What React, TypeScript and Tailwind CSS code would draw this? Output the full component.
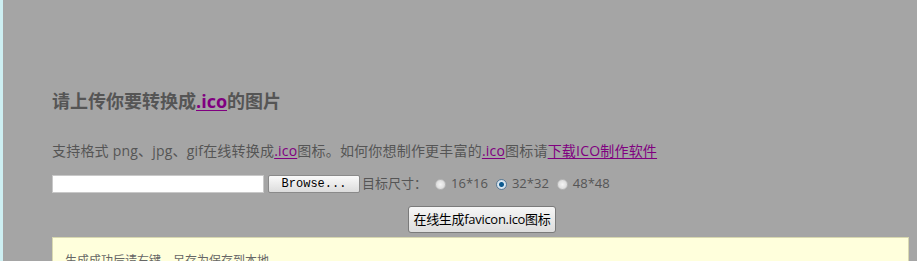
import { useState } from 'react'

const SIZES = ['16*16', '32*32', '48*48']

function Radio({ checked }: { checked: boolean }) {
  return (
    <span
      className={
        'inline-block w-[11px] h-[11px] rounded-full border ' +
        (checked
          ? 'border-[#5a7a96] bg-[radial-gradient(circle,#0d5a8f_0,#0d5a8f_2px,#dbe8f2_3px,#c4d3de_100%)]'
          : 'border-[#b8b8b8] bg-[radial-gradient(circle,#f4f4f4_0,#d2d2d2_100%)]')
      }
    />
  )
}

export default function App() {
  const [size, setSize] = useState('32*32')

  return (
    <div className="flex w-[917px] h-[261px] overflow-hidden bg-[#a5a5a5] font-['Open_Sans','Noto_Sans_CJK_SC',sans-serif] text-[#555]">
      {/* left page edge */}
      <div className="w-[3px] shrink-0 bg-[#cdeff2]" />

      <div className="flex-1 pl-[49px] pr-[5px] pt-[88px]">
        <h2 className="text-[18px] font-bold leading-[26px] text-[#555]">
          请上传你要转换成<a className="text-[#800080] underline underline-offset-2">.ico</a>的图片
        </h2>

        <p className="mt-[27px] text-[14px] leading-[20px] tracking-[0.2px]">
          支持格式 png、jpg、gif在线转换成<a className="text-[#800080] underline underline-offset-2">.ico</a>
          图标。如何你想制作更丰富的<a className="text-[#800080] underline underline-offset-2">.ico</a>图标请
          <a className="text-[#800080] underline underline-offset-2">下载ICO制作软件</a>
        </p>

        <div className="mt-[14px] flex items-center h-[18px]">
          <div className="w-[212px] h-[18px] bg-white border border-[#c8c8c8]" />
          <button className="ml-[4px] w-[92px] h-[18px] rounded-[2px] border border-[#8a8a8a] bg-gradient-to-b from-[#fafafa] to-[#dcdcdc] font-['Liberation_Mono',monospace] text-[12px] leading-[16px] text-black">
            Browse...
          </button>
          <span className="ml-[2px] text-[13px]">目标尺寸：</span>
          <div className="ml-[8px] flex items-center gap-[6px] text-[13px]">
            {SIZES.map((s) => (
              <label key={s} className="flex items-center gap-[5px]" onClick={() => setSize(s)}>
                <Radio checked={size === s} />
                <span className="mr-[2px]">{s}</span>
              </label>
            ))}
          </div>
        </div>

        <div className="mt-[13px] flex justify-center">
          <button className="h-[27px] px-[4px] rounded-[3px] border border-[#7a7a7a] bg-gradient-to-b from-[#f6f6f6] to-[#dddddd] text-[13px] tracking-[-0.3px] text-black">
            在线生成favicon.ico图标
          </button>
        </div>

        <div className="mt-[4px] mr-[3px] h-[40px] border border-[#d8d8b0] bg-[#ffffdc] px-[12px] pt-[14px] text-[12px] text-[#666]">
          生成成功后请右键，另存为保存到本地
        </div>
      </div>
    </div>
  )
}
